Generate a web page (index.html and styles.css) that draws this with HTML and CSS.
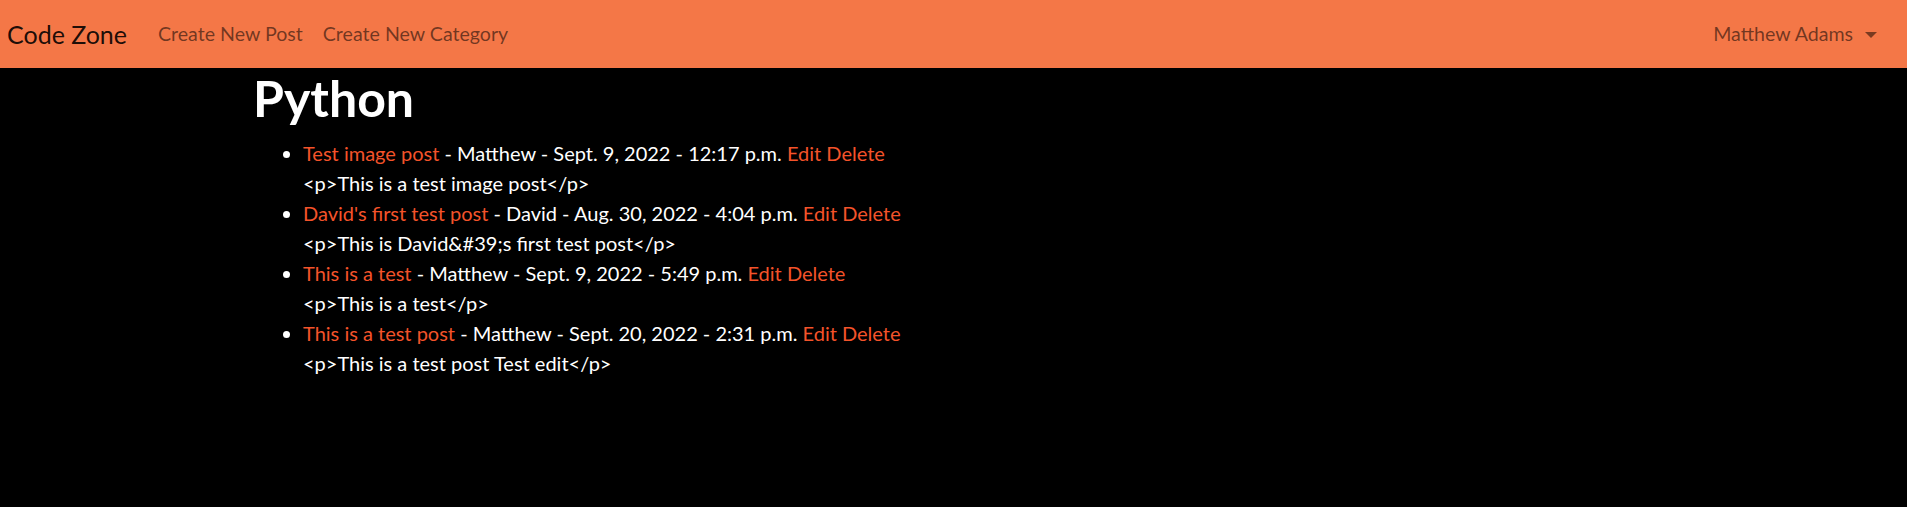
FILE: index.html
```html
<!DOCTYPE html>
<html lang="en">
<head>
<meta charset="utf-8">
<title>Code Zone</title>
<link rel="stylesheet" href="styles.css">
</head>
<body>
<nav class="navbar">
  <a class="brand" href="#">Code Zone</a>
  <div class="nav-links">
    <a class="nav-link" href="#">Create New Post</a>
    <a class="nav-link" href="#">Create New Category</a>
  </div>
  <div class="nav-user">
    <a class="nav-link dropdown-toggle" href="#">Matthew Adams<span class="caret"></span></a>
  </div>
</nav>
<main class="container">
  <h1 class="title">Python</h1>
  <ul class="post-list">
    <li><a class="link" href="#">Test image post</a> - Matthew - Sept. 9, 2022 - 12:17 p.m. <a class="link" href="#">Edit</a> <a class="link" href="#">Delete</a><br>&lt;p&gt;This is a test image post&lt;/p&gt;</li>
    <li><a class="link" href="#">David's first test post</a> - David - Aug. 30, 2022 - 4:04 p.m. <a class="link" href="#">Edit</a> <a class="link" href="#">Delete</a><br>&lt;p&gt;This is David&amp;#39;s first test post&lt;/p&gt;</li>
    <li><a class="link" href="#">This is a test</a> - Matthew - Sept. 9, 2022 - 5:49 p.m. <a class="link" href="#">Edit</a> <a class="link" href="#">Delete</a><br>&lt;p&gt;This is a test&lt;/p&gt;</li>
    <li><a class="link" href="#">This is a test post</a> - Matthew - Sept. 20, 2022 - 2:31 p.m. <a class="link" href="#">Edit</a> <a class="link" href="#">Delete</a><br>&lt;p&gt;This is a test post Test edit&lt;/p&gt;</li>
  </ul>
</main>
</body>
</html>
```

FILE: styles.css
```css
* { box-sizing: border-box; }
html, body { margin: 0; padding: 0; }
body {
  background: #000;
  color: #fff;
  font-family: "Lato", "Open Sans", sans-serif;
  font-size: 20px;
  line-height: 30px;
}
a { text-decoration: none; }

.navbar {
  display: flex;
  align-items: center;
  height: 68px;
  padding: 0 20px 0 7px;
  background: #f47747;
}
.brand {
  font-size: 25px;
  line-height: 30px;
  color: rgba(0, 0, 0, 0.9);
  margin-right: 21px;
}
.nav-links {
  display: flex;
  flex: 1;
}
.nav-link {
  padding: 0 10px;
  color: rgba(0, 0, 0, 0.55);
  font-size: 19.6px;
  line-height: 30px;
}
.nav-user { display: flex; }
.dropdown-toggle {
  display: flex;
  align-items: center;
}
.caret {
  display: inline-block;
  width: 0;
  height: 0;
  margin-left: 12px;
  margin-top: 2px;
  border-top: 6px solid #7a3a20;
  border-left: 6px solid transparent;
  border-right: 6px solid transparent;
}

.container {
  width: 1425px;
  margin: 0 auto;
  padding: 0 12px;
}
.title {
  margin: 0 0 10px;
  font-size: 50px;
  line-height: 60px;
  font-weight: 700;
}
.post-list {
  margin: 0;
  padding-left: 50px;
}
.link { color: #f4532a; }
```
